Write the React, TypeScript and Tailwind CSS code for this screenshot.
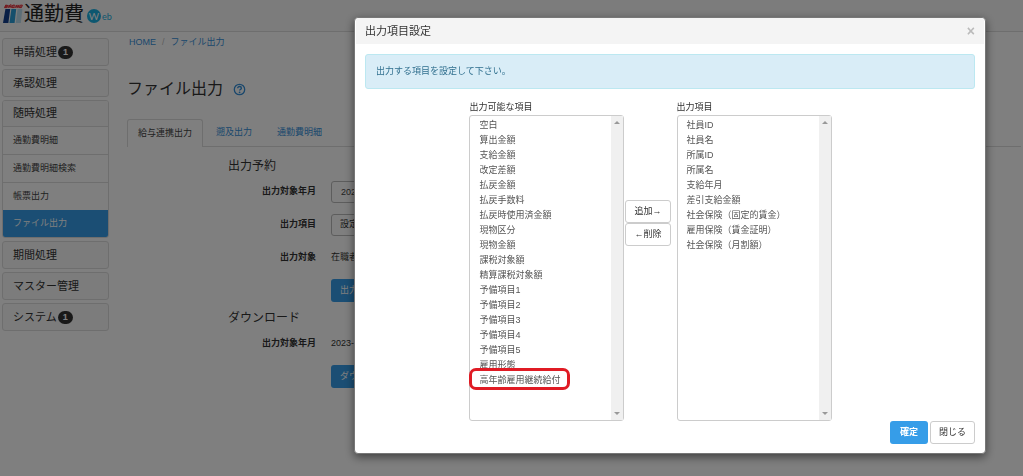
import { useState } from "react";
import type { ReactNode } from "react";

const availableItems = [
  "空白", "算出金額", "支給金額", "改定差額", "払戻金額", "払戻手数料",
  "払戻時使用済金額", "現物区分", "現物金額", "課税対象額", "精算課税対象額",
  "予備項目1", "予備項目2", "予備項目3", "予備項目4", "予備項目5",
  "雇用形態", "高年齢雇用継続給付",
];

const outputItems = [
  "社員ID", "社員名", "所属ID", "所属名", "支給年月", "差引支給金額",
  "社会保険（固定的賃金）", "雇用保険（賃金証明）", "社会保険（月割額）",
];

function Logo() {
  return (
    <div className="flex items-center">
      <svg width="21" height="20" viewBox="0 0 21 20" aria-hidden="true">
        <path d="M3.5 1.2h17L19.3 4H2.3z" fill="#e8333c" opacity=".55" />
        <path d="M2.5 3.6 4 .6M4 1.4h2.4M3 2.4h2.7M2.5 3.6h2.4M6.5 3.6 8 .8l1.6.3M6.9 2.4h2.4M9.4 3.6 11 .8M11 1.2h2M10 3.6h2.4M13.6 3.6 15 .8M14.2 2.2h2.4M17 .8l-1.4 3M18.4 1.1l-1 2.5h2l1-2.5z" fill="none" stroke="#e8333c" strokeWidth="1" />
        <path d="M3.4 5h4.8L6.4 19H1z" fill="#123f8c" />
        <path d="M9.4 5h4.8l-1.6 14H7.4z" fill="#2a9fd8" />
        <path d="M15.6 5h4.8l-1.6 14h-5z" fill="#b9dcee" />
      </svg>
      <span className="pl-px text-[20px] leading-5 text-[#222]">通勤費</span>
      <span className="ml-[3px] mt-1 flex size-[14px] items-center justify-center rounded-full bg-[#1aaee0] font-['Lato',sans-serif] text-[10px] leading-3 text-white">W</span>
      <span className="mt-[6px] pl-px font-['Lato',sans-serif] text-[9px] leading-3 text-[#1aaee0]">eb</span>
    </div>
  );
}

function Badge({ children }: { children: ReactNode }) {
  return (
    <span className="rounded-full bg-[#333] px-[5px] text-[9px] font-bold leading-[13px] text-white">{children}</span>
  );
}

function MenuHeading({ label, badge }: { label: string; badge?: string }) {
  return (
    <a href="#" className="flex h-[28px] items-center gap-px rounded-[3px] border border-[#ddd] bg-[#f8f8f8] px-[10px] text-[11px] text-[#333]">
      {label}
      {badge && <Badge>{badge}</Badge>}
    </a>
  );
}

function Sidebar() {
  return (
    <nav className="mt-[2px] flex w-[107px] shrink-0 flex-col gap-[3px]">
      <MenuHeading label="申請処理" badge="1" />
      <MenuHeading label="承認処理" />
      <div className="overflow-hidden rounded-[3px] border border-[#ddd]">
        <a href="#" className="flex h-[25px] items-center bg-[#f8f8f8] px-[10px] text-[11px] text-[#333]">随時処理</a>
        {["通勤費明細", "通勤費明細検索", "帳票出力"].map((t) => (
          <a key={t} href="#" className="flex h-[28px] items-center border-t border-[#ddd] px-[10px] text-[#444]">{t}</a>
        ))}
        <a href="#" className="flex h-[27px] items-center bg-[#369de8] px-[10px] text-white">ファイル出力</a>
      </div>
      <MenuHeading label="期間処理" />
      <MenuHeading label="マスター管理" />
      <MenuHeading label="システム" badge="1" />
    </nav>
  );
}

function Row({ label, htmlFor, children }: { label: string; htmlFor?: string; children: ReactNode }) {
  return (
    <div className="flex h-[22px] items-center gap-[15px]">
      <label htmlFor={htmlFor} className="w-[189px] text-right font-bold text-[#333]">{label}</label>
      {children}
    </div>
  );
}

function PrimaryButton({ children }: { children: ReactNode }) {
  return (
    <button type="button" className="h-[23px] rounded-[3px] bg-[#369de8] px-[9px] text-white">{children}</button>
  );
}

function FilePage() {
  return (
    <main className="min-w-0 flex-1 pl-[18px]">
      <nav className="flex gap-[6px] px-[2px] leading-3 text-[#3590da]" aria-label="breadcrumb">
        <a href="#">HOME</a>
        <span className="text-[#bbb]">/</span>
        <a href="#">ファイル出力</a>
      </nav>
      <h1 className="mt-[29px] flex items-center gap-[10px] text-[16px] leading-6 text-[#333]">
        ファイル出力
        <svg width="13" height="13" viewBox="0 0 13 13" aria-hidden="true">
          <circle cx="6.5" cy="6.5" r="5.2" fill="none" stroke="#3590da" strokeWidth="1.3" />
          <path d="M4.7 5.2c0-2.3 3.7-2.2 3.7 0 0 1.3-1.8 1.3-1.8 2.4" fill="none" stroke="#3590da" strokeWidth="1.4" />
          <circle cx="6.6" cy="9.3" r=".9" fill="#3590da" />
        </svg>
      </h1>
      <div className="mt-[18px] flex gap-px border-b border-[#ddd]">
        <a href="#" className="-mb-px flex h-[28px] items-center rounded-t-[3px] border border-b-0 border-[#ddd] bg-white px-[10px] text-[#444]">給与連携出力</a>
        <a href="#" className="flex h-[27px] items-center px-[12px] text-[#3590da]">遡及出力</a>
        <a href="#" className="flex h-[27px] items-center px-[12px] text-[#3590da]">通勤費明細</a>
      </div>
      <h2 className="mt-[9px] pl-[101px] text-[12px] leading-5 text-[#333]">出力予約</h2>
      <div className="mt-[5px] flex flex-col gap-[11px]">
        <Row label="出力対象年月" htmlFor="month">
          <input id="month" type="text" defaultValue="2023" className="h-[22px] w-[90px] rounded-[3px] border border-[#bbb] px-[9px] text-[#444]" />
        </Row>
        <Row label="出力項目">
          <button type="button" className="h-[22px] rounded-[3px] border border-[#bbb] px-[8px] text-[#333]">設定</button>
        </Row>
        <Row label="出力対象">
          <span className="text-[#333]">在職者</span>
        </Row>
      </div>
      <div className="mt-[10px] pl-[204px]"><PrimaryButton>出力</PrimaryButton></div>
      <h2 className="mt-[6px] pl-[101px] text-[12px] leading-5 text-[#333]">ダウンロード</h2>
      <div className="mt-[5px]">
        <Row label="出力対象年月">
          <span className="text-[#333]">2023-</span>
        </Row>
      </div>
      <div className="mt-[10px] pl-[204px]"><PrimaryButton>ダウンロード</PrimaryButton></div>
    </main>
  );
}

function ListBox({ id, label, items, marked }: { id: string; label: string; items: string[]; marked?: boolean }) {
  return (
    <div className="flex w-[155px] flex-col">
      <label htmlFor={id} className="h-[14px] leading-3 text-[#333]">{label}</label>
      <div className="relative flex h-[306px] rounded-[3px] border border-[#ccc]">
        <select id={id} multiple className="h-full min-w-0 flex-1 appearance-none overflow-hidden px-[9px] py-px text-[#555] outline-none">
          {items.map((t) => (
            <option key={t} className="px-0 py-px">{t}</option>
          ))}
        </select>
        <div className="flex w-3 flex-col items-center justify-between bg-[#f0f0f0] py-[5px]" aria-hidden="true">
          <svg width="6" height="3" viewBox="0 0 6 3"><path d="M0 3 3 0l3 3z" fill="#999" /></svg>
          <svg width="6" height="3" viewBox="0 0 6 3"><path d="M0 0h6L3 3z" fill="#999" /></svg>
        </div>
        {marked && (
          <div className="pointer-events-none absolute -left-px top-[252px] h-[22px] w-[101px] rounded-[7px] border-3 border-[#e01b24]" />
        )}
      </div>
    </div>
  );
}

function SettingsDialog({ onClose }: { onClose: () => void }) {
  const plain = "rounded-[3px] border border-[#ccc] bg-white px-2 text-[#333] h-[23px]";
  return (
    <div className="fixed inset-0 flex items-start justify-end bg-black/50 pr-[37px] pt-[17px]">
      <section role="dialog" aria-labelledby="dialog-title" className="w-full max-w-[632px] rounded-[4px] border border-[#777] bg-white shadow-[0_3px_10px_rgba(0,0,0,0.5)]">
        <header className="mx-px flex h-[26px] items-center justify-between rounded-t-[3px] bg-[#f4f4f4] px-[9px]">
          <h2 id="dialog-title" className="text-[11px] text-[#333]">出力項目設定</h2>
          <button type="button" aria-label="Close" onClick={onClose} className="text-[14px] font-bold leading-4 text-[#bbb]">×</button>
        </header>
        <div className="px-[10px] pb-[9px] pt-[10px]">
          <p className="rounded-[3px] border border-[#bce8f1] bg-[#d9edf7] px-[10px] py-2 leading-[17px] text-[#31708f]">
            出力する項目を設定して下さい。
          </p>
          <div className="mt-3 flex justify-center pr-[39px]">
            <ListBox id="available" label="出力可能な項目" items={availableItems} marked />
            <div className="flex flex-col pl-px pr-[6px] pt-[99px]">
              <button type="button" className={plain}>追加→</button>
              <button type="button" className={plain}>←削除</button>
            </div>
            <ListBox id="selected" label="出力項目" items={outputItems} />
          </div>
          <div className="flex justify-end gap-[2px]">
            <button type="button" className="h-[23px] rounded-[3px] bg-[#369de8] px-[10px] font-bold text-white">確定</button>
            <button type="button" onClick={onClose} className={plain}>閉じる</button>
          </div>
        </div>
      </section>
    </div>
  );
}

export default function App() {
  const [open, setOpen] = useState(true);
  return (
    <div className="min-h-screen bg-white font-['Liberation_Sans','Noto_Sans_CJK_JP',sans-serif] text-[9px]">
      <header className="flex h-[32px] items-center border-b border-[#ddd] bg-[#f8f8f8] px-[2px] pb-1">
        <Logo />
      </header>
      <div className="flex px-[2px] pt-1">
        <Sidebar />
        <FilePage />
      </div>
      {open && <SettingsDialog onClose={() => setOpen(false)} />}
    </div>
  );
}
